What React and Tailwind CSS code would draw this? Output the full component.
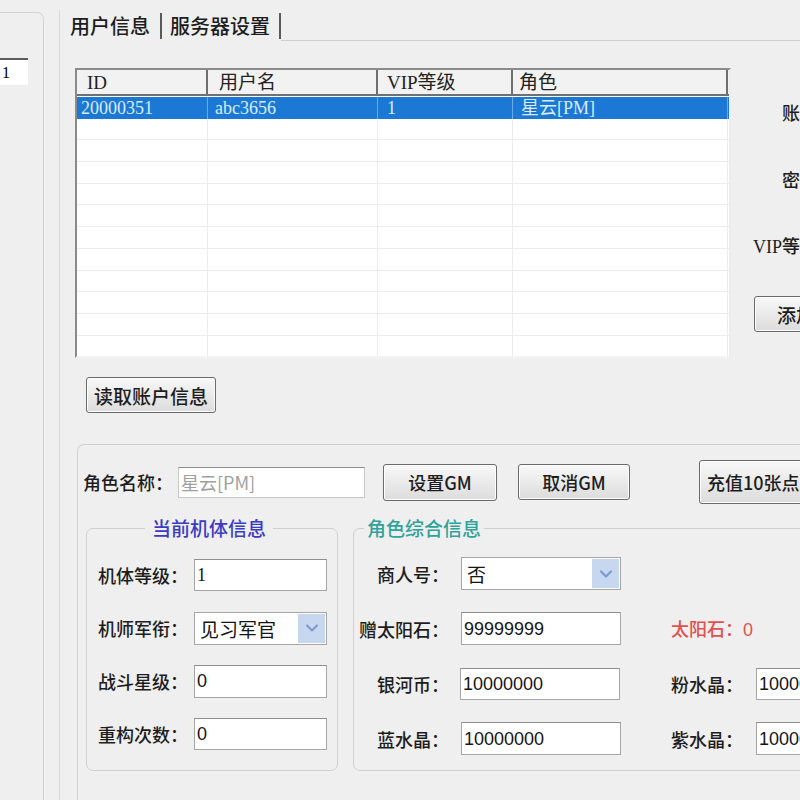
import React from 'react'

const CJK = "font-['Noto_Sans_CJK_SC',sans-serif]"
const NUM = "font-['Liberation_Sans','Noto_Sans_CJK_SC',sans-serif]"
const SERIF = "font-['Liberation_Serif','Noto_Sans_CJK_SC',serif]"

function Chevron() {
  return (
    <svg width="14" height="10" viewBox="0 0 14 10" fill="none" stroke="#7d9bd0" strokeWidth="2.2">
      <path d="M2 2.5l5 5 5-5" strokeLinecap="round" strokeLinejoin="round" />
    </svg>
  )
}

function Btn({ children, className = '' }) {
  return (
    <div
      className={`shrink-0 whitespace-nowrap overflow-hidden border border-[#6a6a6a] rounded-[3px] bg-gradient-to-b from-[#f8f8f8] to-[#dcdcdc] shadow-[inset_0_0_0_1px_#fdfdfd] flex items-center justify-center text-[18px] font-medium text-[#1d1d1d] leading-none ${className}`}
    >
      {children}
    </div>
  )
}

function TextBox({ value, muted, className = '' }) {
  return (
    <div
      className={`shrink-0 bg-white border border-[#a6a6a6] border-t-[#8e8e8e] flex items-center pl-[2px] text-[18px] leading-none ${NUM} ${
        muted ? 'text-[#a0a0a0]' : 'text-[#151515]'
      } ${className}`}
    >
      {value}
    </div>
  )
}

function Combo({ value, className = '' }) {
  return (
    <div className={`shrink-0 bg-white border border-[#a6a6a6] p-[1px] flex ${className}`}>
      <span className="flex-1 flex items-center pl-[4px] text-[19px] leading-none text-[#151515]">{value}</span>
      <span className="w-[27px] bg-[#c8d7f0] flex items-center justify-center">
        <Chevron />
      </span>
    </div>
  )
}

function Label({ children, className = '' }) {
  return <div className={`shrink-0 whitespace-nowrap text-[18px] leading-none font-medium text-[#1d1d1d] ${className}`}>{children}</div>
}

const columns = [
  { title: 'ID', w: 'w-[131px]', pl: 'pl-[10px]', val: '20000351', vpl: 'pl-[4px]' },
  { title: '用户名', w: 'w-[170px]', pl: 'pl-[11px]', val: 'abc3656', vpl: 'pl-[7px]' },
  { title: 'VIP等级', w: 'w-[135px]', pl: 'pl-[9px]', val: '1', vpl: 'pl-[9px]' },
  { title: '角色', w: 'w-[215px]', pl: 'pl-[6px]', val: '星云[PM]', vpl: 'pl-[8px]' },
]

function ListView() {
  const empty = Array.from({ length: 11 })
  return (
    <div className={`w-[656px] h-[290px] shrink-0 overflow-hidden bg-white border-2 border-t-[#8a8a8a] border-l-[#8a8a8a] border-r-[#ececec] border-b-[#f3f3f3] ${SERIF}`}>
      <div className="flex h-[26px] bg-[#f2f2f2] border-b-2 border-[#707070]">
        {columns.map(c => (
          <div key={c.title} className={`${c.w} ${c.pl} border-r-2 border-[#6e6e6e] flex items-center text-[19px] leading-none text-[#222]`}>
            {c.title}
          </div>
        ))}
      </div>
      <div className="flex h-[21.7px] mt-[1px] bg-[#1b78d4] text-[#d9ecff]">
        {columns.map(c => (
          <div key={c.title} className={`${c.w} ${c.vpl} border-r border-[#6aaae8] flex items-center text-[18px] leading-none`}>
            {c.val}
          </div>
        ))}
      </div>
      {empty.map((_, i) => (
        <div key={i} className="flex h-[21.7px] border-b border-[#ececec]">
          {columns.map(c => (
            <div key={c.title} className={`${c.w} border-r border-[#ededed]`} />
          ))}
        </div>
      ))}
    </div>
  )
}

export default function App() {
  return (
    <div className={`w-[800px] h-[800px] overflow-hidden bg-[#efefef] flex ${CJK}`}>
      {/* left panel */}
      <div className="w-[44px] shrink-0 pt-[12px]">
        <div className="h-[800px] border-t border-r border-[#d3d3d3] rounded-tr-[7px] pt-[45px]">
          <div className={`w-[28px] h-[27px] bg-white border-t-2 border-[#5c5c5c] flex items-center pl-[2px] text-[16px] leading-none ${SERIF}`}>1</div>
        </div>
      </div>

      {/* main */}
      <div className="flex-1 min-w-0 pl-[15px] pt-[10px]">
        <div className="h-[800px] border-l border-[#d9d9d9]">
          {/* tab header */}
          <div className="flex items-center h-[31px]">
            <span className="pl-[10px] text-[20px] leading-none font-medium text-[#1d1d1d]">用户信息</span>
            <span className="ml-[10px] w-[2px] h-[26px] bg-[#5a5a5a]" />
            <span className="ml-[8px] text-[20px] leading-none font-medium text-[#1d1d1d]">服务器设置</span>
            <span className="ml-[9px] w-[2px] h-[26px] bg-[#5a5a5a]" />
            <span className="flex-1 self-stretch border-b border-[#cfcfcf]" />
          </div>

          {/* tab body */}
          <div className="pl-[15px] pt-[27px]">
            <div className="flex">
              <div className="flex flex-col">
                <ListView />
                <Btn className="ml-[11px] mt-[19px] w-[130px] h-[36px] text-[19px]">读取账户信息</Btn>
              </div>
              <div className="w-[105px] shrink-0 flex flex-col items-end pt-[35px]">
                <Label className="h-[20px]">账号：</Label>
                <Label className="h-[20px] mt-[47px]">密码：</Label>
                <Label className={`h-[20px] mt-[48px] ${SERIF}`}>VIP等级：</Label>
                <Btn className="self-start ml-[23px] mt-[38px] w-[90px] h-[36px] text-[19px] justify-start pl-[22px]">添加</Btn>
              </div>
            </div>

            {/* character group */}
            <div className="ml-[2px] mt-[31px] h-[400px] border-t border-l border-[#d0d0d0] rounded-tl-[7px] pl-[5px] pt-[15px]">
              <div className="flex items-center h-[44px]">
                <Label className="w-[90px]">角色名称：</Label>
                <TextBox value="星云[PM]" muted className={`ml-[5px] w-[187px] h-[31px] border-[#c9c9c9] ${CJK}`} />
                <Btn className="ml-[18px] w-[114px] h-[37px]">设置GM</Btn>
                <Btn className="ml-[21px] w-[112px] h-[36px]">取消GM</Btn>
                <Btn className="ml-[69px] w-[124px] h-[44px] justify-start pl-[7px]">充值10张点卡</Btn>
              </div>

              <div className="flex mt-[12px]">
                {/* 当前机体信息 */}
                <fieldset className="ml-[3px] w-[252px] h-[255px] shrink-0 border border-[#cfcfcf] rounded-[7px] pt-[19px]">
                  <legend className="ml-[58px] px-[7px] text-[19px] leading-[24px] font-medium text-[#3b3bc4]">当前机体信息</legend>
                  <div className="flex flex-col gap-[21px]">
                    {[
                      ['机体等级：', <TextBox value="1" className={`w-[133px] h-[32px] ${SERIF}`} />],
                      ['机师军衔：', <Combo value="见习军官" className="w-[133px] h-[33px]" />],
                      ['战斗星级：', <TextBox value="0" className="w-[133px] h-[33px]" />],
                      ['重构次数：', <TextBox value="0" className="w-[133px] h-[32px]" />],
                    ].map(([l, input]) => (
                      <div key={l} className="flex items-center h-[32px]">
                        <Label className="w-[102px] pl-[11px]">{l}</Label>
                        <div className="ml-[5px]">{input}</div>
                      </div>
                    ))}
                  </div>
                </fieldset>

                {/* 角色综合信息 */}
                <fieldset className="ml-[15px] w-[470px] h-[255px] shrink-0 border border-[#cfcfcf] rounded-[7px] pt-[17px]">
                  <legend className="ml-[10px] px-[3px] text-[19px] leading-[24px] font-medium text-[#2fa39b]">角色综合信息</legend>
                  <div className="flex flex-col gap-[22px] pl-[4px]">
                    <div className="flex items-center h-[33px]">
                      <Label className="w-[91px] text-right">商人号：</Label>
                      <Combo value="否" className="ml-[12px] w-[160px] h-[33px]" />
                    </div>
                    <div className="flex items-center h-[33px]">
                      <Label className="w-[91px] text-right">赠太阳石：</Label>
                      <TextBox value="99999999" className="ml-[12px] w-[160px] h-[33px] text-[17px]" />
                      <Label className="ml-[50px] text-[#e25050]">
                        太阳石：<span className={NUM}>0</span>
                      </Label>
                    </div>
                    <div className="flex items-center h-[33px]">
                      <Label className="w-[91px] text-right">银河币：</Label>
                      <TextBox value="10000000" className="ml-[11px] w-[160px] h-[32px]" />
                      <Label className="ml-[51px] w-[72px]">粉水晶：</Label>
                      <TextBox value="10000000" className="ml-[13px] w-[120px] h-[32px]" />
                    </div>
                    <div className="flex items-center h-[33px]">
                      <Label className="w-[91px] text-right">蓝水晶：</Label>
                      <TextBox value="10000000" className="ml-[12px] w-[160px] h-[33px]" />
                      <Label className="ml-[50px] w-[72px]">紫水晶：</Label>
                      <TextBox value="10000000" className="ml-[13px] w-[120px] h-[33px]" />
                    </div>
                  </div>
                </fieldset>
              </div>
            </div>
          </div>
        </div>
      </div>
    </div>
  )
}
